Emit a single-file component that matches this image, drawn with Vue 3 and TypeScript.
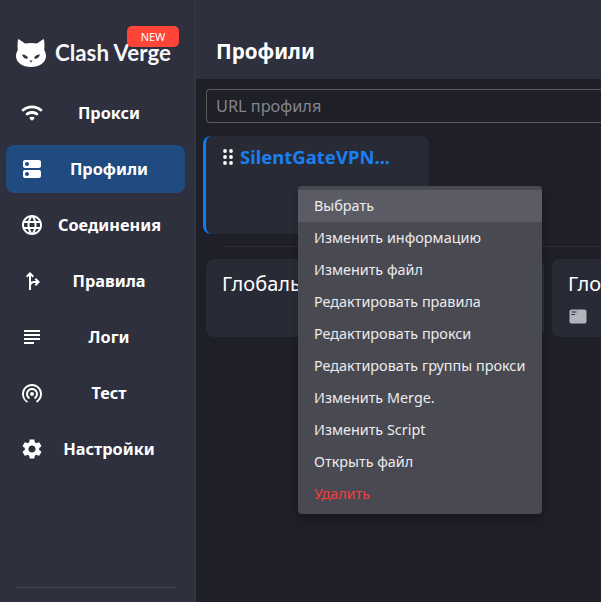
<template>
  <div class="layout">
    <aside class="sidebar">
      <div class="logo">
        <svg class="cat" viewBox="0 0 30 28">
          <path d="M2 0.5 C2.3 0.2 2.8 0.2 3.2 0.5 L9 4.6 C12.5 3.9 17.5 3.9 21 4.6 L26.8 0.5 C27.2 0.2 27.7 0.2 28 0.5 C28.6 4 28.6 8 28.2 11 C29.4 13 30 15 30 17 C30 23.5 23.5 28 15 28 C6.5 28 0 23.5 0 17 C0 15 0.6 13 1.8 11 C1.4 8 1.4 4 2 0.5 Z" fill="#fff" />
          <path d="M6 15.5 C8.5 15.3 11 16.5 12 19 C11 20.5 7.5 20 6 15.5 Z" fill="#2e303d" />
          <path d="M24 15.5 C21.5 15.3 19 16.5 18 19 C19 20.5 22.5 20 24 15.5 Z" fill="#2e303d" />
          <path d="M13.4 21.6 H16.6 L15 23.6 Z" fill="#2e303d" />
        </svg>
        <span class="logo-text">Clash Verge</span>
        <span class="badge">NEW</span>
      </div>
      <nav class="nav">
        <div v-for="item in navItems" :key="item.label" class="nav-item" :class="{ active: item.active }">
          <svg class="nav-icon" viewBox="0 0 24 24"><path :d="item.icon" fill="#fff" /></svg>
          <span class="nav-label">{{ item.label }}</span>
        </div>
      </nav>
      <div class="side-bottom"><div class="side-line"></div></div>
    </aside>

    <main class="main">
      <header class="header">Профили</header>
      <div class="content">
        <div class="url-input">URL профиля</div>
        <div class="profile-card">
          <div class="profile-title">
            <svg class="drag" viewBox="0 0 10 16">
              <circle v-for="d in dots" :key="d.x + '-' + d.y" :cx="d.x" :cy="d.y" r="1.9" fill="#fff" />
            </svg>
            <span>SilentGateVPN...</span>
          </div>
        </div>
        <div class="divider"></div>
        <div class="cards">
          <div class="card wide"><div class="card-title">Глобальные</div></div>
          <div class="card">
            <div class="card-title">Глобальный</div>
            <svg class="card-icon" viewBox="0 0 18 15">
              <rect x="0.5" y="0.5" width="17" height="14" rx="2" fill="#b3b3bb" />
              <path d="M2.5 3 H7.5 M2.5 5.5 H6" stroke="#282a36" stroke-width="1.1" />
            </svg>
          </div>
        </div>
      </div>
    </main>

    <ul class="menu">
      <li v-for="(m, i) in menuItems" :key="m" :class="{ hover: i === 0, danger: m === 'Удалить' }">{{ m }}</li>
    </ul>
  </div>
</template>

<script setup lang="ts">
interface NavItem {
  label: string
  icon: string
  active?: boolean
}

const navItems: NavItem[] = [
  {
    label: 'Прокси',
    icon: 'M2.06 10.06c.51.51 1.32.56 1.87.1 4.67-3.84 11.45-3.84 16.13-.01.56.46 1.38.42 1.89-.09.59-.59.55-1.57-.1-2.1-5.71-4.67-13.97-4.67-19.69 0-.65.52-.7 1.5-.1 2.1zm7.76 7.76 1.47 1.47c.39.39 1.02.39 1.41 0l1.47-1.47c.47-.47.37-1.28-.23-1.59-1.22-.63-2.68-.63-3.91 0-.57.31-.68 1.12-.21 1.59zm-3.73-3.73c.49.49 1.26.54 1.83.13 2.44-1.73 5.73-1.73 8.17 0 .57.4 1.34.36 1.83-.13l.01-.01c.6-.6.56-1.62-.13-2.11-3.44-2.49-8.14-2.49-11.59 0-.69.5-.73 1.51-.12 2.12z'
  },
  {
    label: 'Профили',
    active: true,
    icon: 'M19 13H5c-1.1 0-2 .9-2 2v4c0 1.1.9 2 2 2h14c1.1 0 2-.9 2-2v-4c0-1.1-.9-2-2-2zM7 19c-1.1 0-2-.9-2-2s.9-2 2-2 2 .9 2 2-.9 2-2 2zM19 3H5c-1.1 0-2 .9-2 2v4c0 1.1.9 2 2 2h14c1.1 0 2-.9 2-2V5c0-1.1-.9-2-2-2zM7 9c-1.1 0-2-.9-2-2s.9-2 2-2 2 .9 2 2-.9 2-2 2z'
  },
  {
    label: 'Соединения',
    icon: 'M11.99 2C6.47 2 2 6.48 2 12s4.47 10 9.99 10C17.52 22 22 17.52 22 12S17.52 2 11.99 2zm6.93 6h-2.95c-.32-1.25-.78-2.45-1.38-3.56 1.84.63 3.37 1.91 4.33 3.56zM12 4.04c.83 1.2 1.48 2.53 1.91 3.96h-3.82c.43-1.43 1.08-2.76 1.91-3.96zM4.26 14C4.1 13.36 4 12.69 4 12s.1-1.36.26-2h3.38c-.08.66-.14 1.32-.14 2s.06 1.34.14 2H4.26zm.82 2h2.95c.32 1.25.78 2.45 1.38 3.56-1.84-.63-3.37-1.9-4.33-3.56zm2.95-8H5.08c.96-1.66 2.49-2.93 4.33-3.56C8.81 5.55 8.35 6.75 8.03 8zM12 19.96c-.83-1.2-1.48-2.53-1.91-3.96h3.82c-.43 1.43-1.08 2.76-1.91 3.96zM14.34 14H9.66c-.09-.66-.16-1.32-.16-2s.07-1.35.16-2h4.68c.09.65.16 1.32.16 2s-.07 1.34-.16 2zm.25 5.56c.6-1.11 1.06-2.31 1.38-3.56h2.95c-.96 1.65-2.49 2.93-4.33 3.56zM16.36 14c.08-.66.14-1.32.14-2s-.06-1.34-.14-2h3.38c.16.64.26 1.31.26 2s-.1 1.36-.26 2h-3.38z'
  },
  {
    label: 'Правила',
    icon: 'M10 3L6 7l1.41 1.41L9 6.83V21h2v-4c0-1.66 1.34-3 3-3h2.17l-1.58 1.59L16 17l4-4-4-4-1.41 1.41L16.17 12H14c-1.1 0-2.1.3-3 .8V6.83l1.59 1.58L14 7z'
  },
  {
    label: 'Логи',
    icon: 'M4 5h16v2H4zm0 4h16v2H4zm0 4h16v2H4zm0 4h10v2H4z'
  },
  {
    label: 'Тест',
    icon: 'M12 11c-1.1 0-2 .9-2 2s.9 2 2 2 2-.9 2-2-.9-2-2-2zm6 2c0-3.31-2.69-6-6-6s-6 2.69-6 6c0 2.22 1.21 4.15 3 5.19l1-1.74c-1.19-.7-2-1.97-2-3.45 0-2.21 1.79-4 4-4s4 1.79 4 4c0 1.48-.81 2.75-2 3.45l1 1.74c1.79-1.04 3-2.97 3-5.19zM12 3C6.48 3 2 7.48 2 13c0 3.7 2.01 6.92 4.99 8.65l1-1.73C5.61 19.53 4 16.46 4 13c0-4.42 3.58-8 8-8s8 3.58 8 8c0 2.96-1.61 5.53-4 6.92l1 1.73c2.99-1.73 5-4.95 5-8.65 0-5.52-4.48-10-10-10z'
  },
  {
    label: 'Настройки',
    icon: 'M19.14 12.94c.04-.3.06-.61.06-.94 0-.32-.02-.64-.07-.94l2.03-1.58c.18-.14.23-.41.12-.61l-1.92-3.32c-.12-.22-.37-.29-.59-.22l-2.39.96c-.5-.38-1.03-.7-1.62-.94l-.36-2.54c-.04-.24-.24-.41-.48-.41h-3.84c-.24 0-.43.17-.47.41l-.36 2.54c-.59.24-1.13.57-1.62.94l-2.39-.96c-.22-.08-.47 0-.59.22L2.74 8.87c-.12.21-.08.47.12.61l2.03 1.58c-.05.3-.09.63-.09.94s.02.64.07.94l-2.03 1.58c-.18.14-.23.41-.12.61l1.92 3.32c.12.22.37.29.59.22l2.39-.96c.5.38 1.03.7 1.62.94l.36 2.54c.05.24.24.41.48.41h3.84c.24 0 .44-.17.47-.41l.36-2.54c.59-.24 1.13-.56 1.62-.94l2.39.96c.22.08.47 0 .59-.22l1.92-3.32c.12-.22.07-.47-.12-.61l-2.01-1.58zM12 15.6c-1.98 0-3.6-1.62-3.6-3.6s1.62-3.6 3.6-3.6 3.6 1.62 3.6 3.6-1.62 3.6-3.6 3.6z'
  }
]

const dots = [2, 8, 14].flatMap((y) => [2, 8].map((x) => ({ x, y })))

const menuItems = [
  'Выбрать',
  'Изменить информацию',
  'Изменить файл',
  'Редактировать правила',
  'Редактировать прокси',
  'Редактировать группы прокси',
  'Изменить Merge.',
  'Изменить Script',
  'Открыть файл',
  'Удалить'
]
</script>

<style>
html, body {
  margin: 0;
  background: #1e1f27;
  overflow: hidden;
}
</style>

<style scoped>
.layout {
  position: relative;
  display: flex;
  width: 601px;
  height: 602px;
  overflow: hidden;
  font-family: "Noto Sans", "Open Sans", sans-serif;
  color: #fff;
  background: #1e1f27;
}

.sidebar {
  display: flex;
  flex-direction: column;
  flex: none;
  width: 195px;
  background: #2e303d;
  border-right: 1px solid #393b48;
}

.logo {
  position: relative;
  display: flex;
  align-items: center;
  height: 28px;
  margin: 39px 0 22px 16px;
}

.cat {
  width: 30px;
  height: 28px;
  flex: none;
}

.logo-text {
  margin: -2px 0 0 9px;
  font-family: "Lato", "Noto Sans", sans-serif;
  font-size: 22.3px;
  font-weight: 700;
  color: #f7f7f9;
  white-space: nowrap;
}

.badge {
  position: absolute;
  left: 111px;
  top: -13px;
  width: 52px;
  height: 21px;
  line-height: 21px;
  text-align: center;
  font-size: 11px;
  border-radius: 5px;
  background: #ff4538;
}

.nav {
  display: flex;
  flex-direction: column;
  gap: 8px;
  margin: 0 10px 0 6px;
}

.nav-item {
  display: flex;
  align-items: center;
  height: 48px;
  padding: 0 25px 0 14px;
  border-radius: 8px;
}

.nav-item.active {
  background: #1f4b80;
}

.nav-icon {
  width: 24px;
  height: 24px;
  flex: none;
  margin-right: 14px;
}

.nav-label {
  flex: 1;
  text-align: center;
  font-size: 16.3px;
  font-weight: 700;
  white-space: nowrap;
}

.side-bottom {
  margin-top: auto;
  padding: 0 20px 14px 16px;
}

.side-line {
  height: 1px;
  background: #474955;
}

.main {
  flex: 1;
  min-width: 0;
  display: flex;
  flex-direction: column;
}

.header {
  flex: none;
  height: 79px;
  box-sizing: border-box;
  padding: 37px 0 0 20px;
  line-height: 28px;
  font-size: 20.6px;
  font-weight: 700;
  background: #2e303d;
}

.content {
  flex: 1;
  padding: 10px 0 0 7px;
  min-width: 0;
}

.url-input {
  box-sizing: border-box;
  height: 34px;
  margin: 0 -5px 0 3px;
  padding-left: 9px;
  line-height: 32px;
  font-size: 16.3px;
  color: #85858c;
  border: 1px solid #5a5a61;
  border-right: 0;
  border-radius: 4px 0 0 4px;
}

.profile-card {
  box-sizing: border-box;
  width: 226px;
  height: 98px;
  margin-top: 13px;
  padding: 8px 0 0 17px;
  background: #282a36;
  border-left: 3px solid #0a7cf5;
  border-radius: 8px;
}

.profile-title {
  display: flex;
  align-items: center;
  gap: 7px;
  font-size: 18.5px;
  font-weight: 700;
  line-height: 26px;
  color: #1a7ff0;
}

.drag {
  width: 10px;
  height: 16px;
  flex: none;
}

.divider {
  height: 1px;
  margin: 12px 0 12px 20px;
  background: #2d2e37;
}

.cards {
  display: flex;
  gap: 8px;
  margin-left: 3px;
}

.card {
  flex: none;
  box-sizing: border-box;
  width: 338px;
  height: 78px;
  padding: 10px 17px 8px 16px;
  background: #282a36;
  border-radius: 8px;
}

.card-title {
  font-size: 20px;
  line-height: 30px;
  white-space: nowrap;
}

.card-icon {
  display: block;
  width: 18px;
  height: 15px;
  margin-top: 10px;
  margin-left: 1px;
}

.menu {
  position: absolute;
  left: 298px;
  top: 186px;
  width: 244px;
  margin: 0;
  padding: 4px 0 4px;
  list-style: none;
  background: #494952;
  border-radius: 4px;
  box-shadow: 0 5px 8px rgba(0, 0, 0, 0.2);
}

.menu li {
  height: 32px;
  padding: 0 16px;
  line-height: 32px;
  font-size: 14.4px;
  color: #ececee;
  white-space: nowrap;
}

.menu li.hover {
  background: #5b5b65;
}

.menu li.danger {
  color: #f03e3e;
}
</style>
